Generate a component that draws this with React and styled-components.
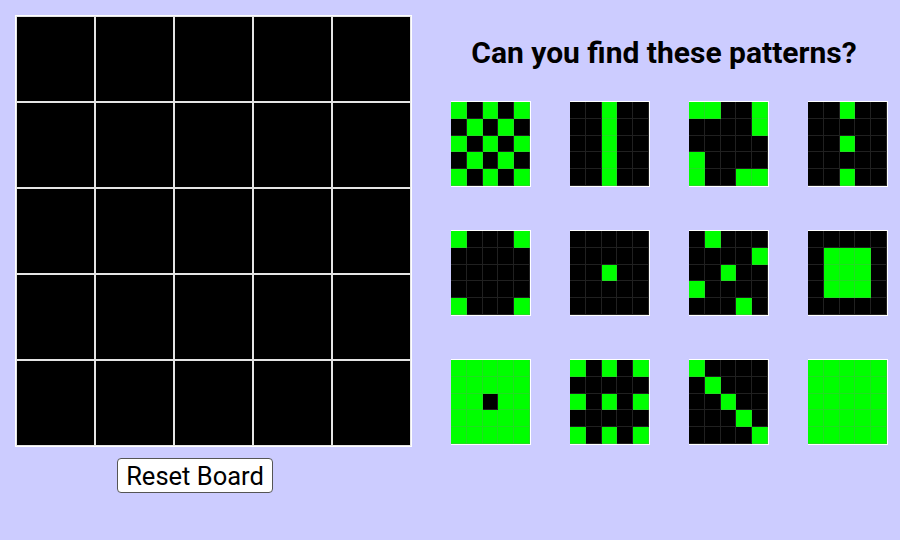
import React from "react";
import styled, { createGlobalStyle } from "styled-components";

const GlobalStyle = createGlobalStyle`
  body {
    margin: 0;
    background: #ccccff;
    font-family: Roboto, "Liberation Sans", sans-serif;
  }
`;

const PATTERNS = [
  ["10101", "01010", "10101", "01010", "10101"],
  ["00100", "00100", "00100", "00100", "00100"],
  ["11001", "00001", "00000", "10000", "10011"],
  ["00100", "00000", "00100", "00000", "00100"],
  ["10001", "00000", "00000", "00000", "10001"],
  ["00000", "00000", "00100", "00000", "00000"],
  ["01000", "00001", "00100", "10000", "00010"],
  ["00000", "01110", "01110", "01110", "00000"],
  ["11111", "11111", "11011", "11111", "11111"],
  ["10101", "00000", "10101", "00000", "10101"],
  ["10000", "01000", "00100", "00010", "00001"],
  ["11111", "11111", "11111", "11111", "11111"]
];

const Page = styled.div`
  display: flex;
  padding: 15px;
  width: 900px;
  height: 540px;
  box-sizing: border-box;
`;

const LeftColumn = styled.div`
  display: flex;
  flex-direction: column;
  align-items: flex-start;
`;

const Board = styled.div`
  display: grid;
  grid-template-columns: repeat(5, 77px);
  grid-template-rows: repeat(5, 84px);
  gap: 2px;
  padding: 2px;
  background: #e4e4e4;
  box-shadow: inset 0 0 0 1px #fff;
`;

const BoardCell = styled.div`
  background: ${props => (props.on ? "#00ff00" : "#000")};
`;

const ResetButton = styled.button`
  margin: 11px 0 0 102px;
  width: 156px;
  height: 35px;
  padding: 0;
  background: #fff;
  border: 1px solid #555;
  border-radius: 4px;
  font-family: Roboto, "Liberation Sans", sans-serif;
  font-size: 25.5px;
  color: #000;
  cursor: pointer;
`;

const RightColumn = styled.div`
  margin-left: 38px;
  display: flex;
  flex-direction: column;
`;

const Title = styled.h2`
  margin: 21px 0 31px;
  padding-right: 10px;
  font-size: 30px;
  line-height: 34px;
  font-weight: 700;
  text-align: center;
  white-space: nowrap;
  color: #000;
`;

const PatternGrid = styled.div`
  display: grid;
  grid-template-columns: repeat(4, 80px);
  grid-auto-rows: 86px;
  column-gap: 39px;
  row-gap: 43px;
  margin-left: 1px;
`;

const Pattern = styled.div`
  display: grid;
  grid-template-columns: repeat(5, 1fr);
  grid-template-rows: repeat(5, 1fr);
  border-top: 1px solid #fff;
  border-right: 1px solid #fff;
  border-bottom: 1px solid #fff;
`;

const PatternCell = styled.div`
  background: ${props => (props.on ? "#00ff00" : "#000")};
  box-shadow: inset -1px -1px 0 rgba(128, 128, 128, 0.25);
`;

export default function App() {
  const cells = Array.from({ length: 25 });
  return (
    <>
      <GlobalStyle />
      <Page>
        <LeftColumn>
          <Board>
            {cells.map((_, i) => (
              <BoardCell key={i} />
            ))}
          </Board>
          <ResetButton>Reset Board</ResetButton>
        </LeftColumn>
        <RightColumn>
          <Title>Can you find these patterns?</Title>
          <PatternGrid>
            {PATTERNS.map((rows, p) => (
              <Pattern key={p}>
                {rows.join("").split("").map((c, i) => (
                  <PatternCell key={i} on={c === "1"} />
                ))}
              </Pattern>
            ))}
          </PatternGrid>
        </RightColumn>
      </Page>
    </>
  );
}
